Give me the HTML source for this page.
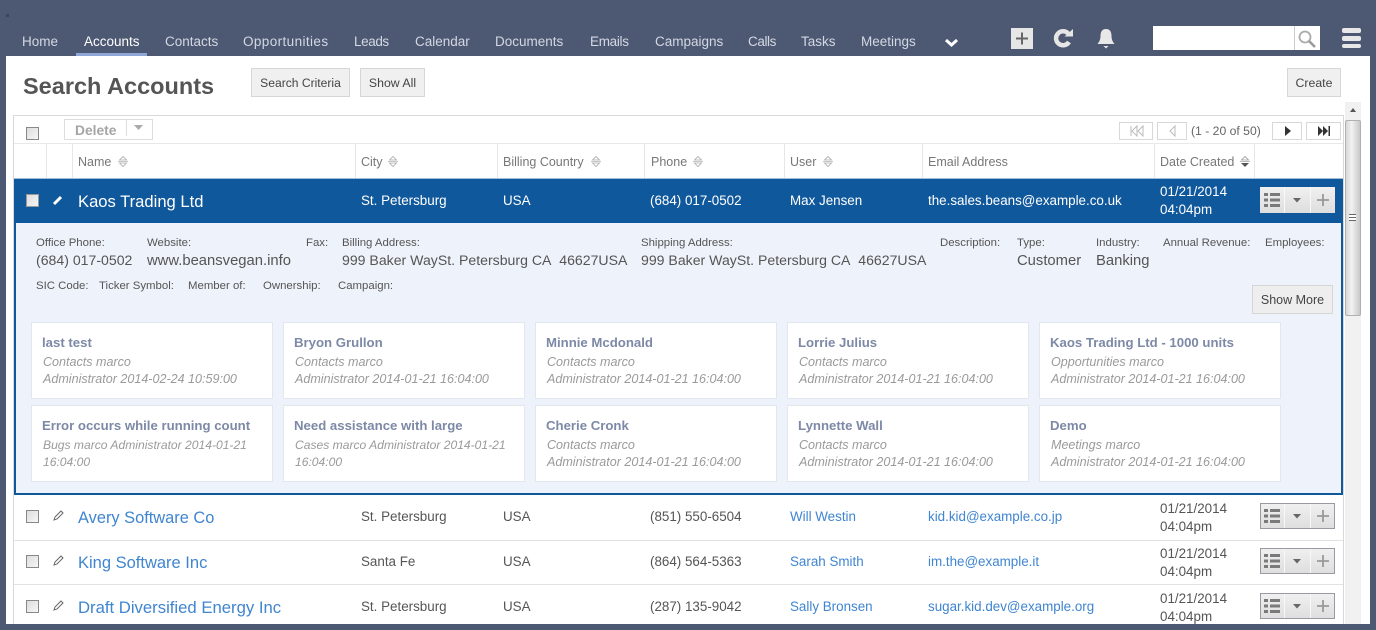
<!DOCTYPE html>
<html><head><meta charset="utf-8"><style>
html,body{margin:0;padding:0}
body{width:1376px;height:630px;overflow:hidden;background:#4d5873;position:relative;font-family:"Liberation Sans",sans-serif;color:#555}
.a{position:absolute;box-sizing:border-box}
.t{position:absolute;white-space:nowrap;line-height:20px}
.n{font-size:13.5px;color:#d3d8e2;top:32px}
.b{position:absolute;box-sizing:border-box;background:#f0f0f0;border:1px solid #d6d6d6;font-size:12.3px;color:#444;text-align:center;line-height:28px;height:29px;top:68px}
.h{font-size:12.5px;color:#777;top:152px}
.c{font-size:13.4px;color:#555}
.w{color:#fff}
.l{color:#3f85d0}
.nm{font-size:16.6px}
.lb{font-size:11.4px;color:#555;top:233px}
.lb2{top:276px}
.v{font-size:14.8px;color:#555;top:251px}
.v.v2{font-size:14.1px;top:250px}
.card{position:absolute;box-sizing:border-box;width:242px;height:77px;background:#fff;border:1px solid #e2e6ee}
.ct{position:absolute;left:10px;top:10px;font-size:13.2px;font-weight:bold;color:#7d89a6;line-height:20px;white-space:nowrap}
.cs{position:absolute;left:11px;top:31px;width:228px;font-size:12.55px;font-style:italic;color:#9a9a9a;line-height:17px;white-space:nowrap}
.cs.w2{font-size:12.1px}
.vl{position:absolute;width:1px;background:#e6e6e6}
.hl{position:absolute;left:14px;width:1329px;height:1px;background:#e2e2e2}
.pg{position:absolute;box-sizing:border-box;top:122px;height:18px;border:1px solid #d8d8d8;background:#fff}
</style></head><body>
<div class="a" style="left:6px;top:14px;width:3px;height:3px;background:#3c4558"></div>

<span class="t n" style="left:22px">Home</span>
<span class="t n" style="left:84px;color:#fff">Accounts</span>
<div class="a" style="left:76px;top:53px;width:71px;height:3px;background:#8ea6d6"></div>
<span class="t n" style="left:165px">Contacts</span>
<span class="t n" style="left:243px;letter-spacing:.4px">Opportunities</span>
<span class="t n" style="left:354px;letter-spacing:-.4px">Leads</span>
<span class="t n" style="left:415px">Calendar</span>
<span class="t n" style="left:495px">Documents</span>
<span class="t n" style="left:590px;letter-spacing:-.3px">Emails</span>
<span class="t n" style="left:655px">Campaigns</span>
<span class="t n" style="left:748px;letter-spacing:-.4px">Calls</span>
<span class="t n" style="left:801px">Tasks</span>
<span class="t n" style="left:861px">Meetings</span>
<svg class="a" style="left:945px;top:38px" width="14" height="10"><path d="M1 2l5.500 5 5.500-5" fill="none" stroke="#fff" stroke-width="3"/></svg>
<div class="a" style="left:1011px;top:28px;width:22px;height:21px;background:#e6e6e6"></div>
<svg class="a" style="left:1011px;top:28px" width="22" height="21"><path d="M5 10.500h12M11 4.500v12" stroke="#666" stroke-width="2"/></svg>
<svg class="a" style="left:1052px;top:27px" width="22" height="22"><path d="M17 15a7 7 0 1 1-.8-8.500" fill="none" stroke="#e6e6e6" stroke-width="4.500"/><path d="M12.500 9.500H21V2z" fill="#e6e6e6"/></svg>
<svg class="a" style="left:1096px;top:27px" width="20" height="23"><path d="M10 2c-4 0-5.500 3-5.500 7 0 4-1.500 6-3 8h17c-1.500-2-3-4-3-8 0-4-1.500-7-5.500-7z" fill="#e8e8e8"/><path d="M7.500 19h5l-2.500 2.500z" fill="#e8e8e8"/></svg>
<div class="a" style="left:1153px;top:26px;width:167px;height:24px;background:#fff"></div>
<div class="a" style="left:1294px;top:26px;width:1px;height:24px;background:#ccc"></div>
<svg class="a" style="left:1295px;top:28px" width="24" height="22"><circle cx="10" cy="9" r="5.500" fill="none" stroke="#aaa" stroke-width="1.800"/><path d="M14 13l6 6" stroke="#999" stroke-width="2.500"/></svg>
<div class="a" style="left:1342px;top:28px;width:19px;height:5px;background:#e8e8e8;border-radius:2px"></div>
<div class="a" style="left:1342px;top:36px;width:19px;height:5px;background:#e8e8e8;border-radius:2px"></div>
<div class="a" style="left:1342px;top:44px;width:19px;height:4px;background:#e8e8e8;border-radius:2px"></div>

<div class="a" style="left:6px;top:56px;width:1364px;height:568px;background:#fff"></div>
<span class="t" style="left:23px;top:72px;font-size:23.5px;line-height:28px;font-weight:bold;color:#555">Search Accounts</span>
<div class="b" style="left:251px;width:99px;font-size:12.1px">Search Criteria</div>
<div class="b" style="left:360px;width:65px">Show All</div>
<div class="b" style="left:1287px;width:54px">Create</div>

<div class="a" style="left:1345px;top:102px;width:16px;height:522px;background:#f1f1f1"></div>
<svg class="a" style="left:1345px;top:106px" width="16" height="8"><path d="M5 6l3-4 3 4z" fill="#555"/></svg>
<div class="a" style="left:1345px;top:120px;width:16px;height:196px;background:linear-gradient(90deg,#d8d8d8,#f2f2f2 40%,#c8c8c8);border:1px solid #b0b0b0;border-radius:2px"></div>
<div class="a" style="left:1349px;top:214px;width:7px;height:7px;border-top:1px solid #666;border-bottom:1px solid #666;background:linear-gradient(#fff 2px,#666 2px,#666 3px,#fff 3px)"></div>

<!-- table frame -->
<div class="a" style="left:13px;top:115px;width:1331px;height:515px;border:1px solid #d8d8d8;border-bottom:0"></div>
<div class="hl" style="top:143px;background:#e8e8e8"></div>
<div class="vl" style="left:46px;top:144px;height:34px"></div>
<div class="vl" style="left:72px;top:144px;height:34px"></div>
<div class="vl" style="left:355px;top:144px;height:34px"></div>
<div class="vl" style="left:497px;top:144px;height:34px"></div>
<div class="vl" style="left:644px;top:144px;height:34px"></div>
<div class="vl" style="left:784px;top:144px;height:34px"></div>
<div class="vl" style="left:922px;top:144px;height:34px"></div>
<div class="vl" style="left:1154px;top:144px;height:34px"></div>
<div class="vl" style="left:1254px;top:144px;height:34px"></div>

<div class="a" style="left:26px;top:127px;width:13px;height:13px;background:linear-gradient(135deg,#ddd,#f6f6f6);border:1px solid #888"></div>
<div class="a" style="left:64px;top:119px;width:89px;height:21px;border:1px solid #ddd;background:#fff"></div>
<span class="t" style="left:75px;top:121px;font-size:13.8px;font-weight:bold;color:#a5a5a5">Delete</span>
<div class="a" style="left:126px;top:120px;width:1px;height:16px;background:#ddd"></div>
<svg class="a" style="left:133px;top:125px" width="12" height="7"><path d="M1 0h9l-4.500 5z" fill="#aaa"/></svg>

<div class="pg" style="left:1119px;width:34px"></div>
<svg class="a" style="left:1130px;top:125px" width="14" height="12"><path d="M1 1v10M7 1l-5 5 5 5zM13 1l-5 5 5 5z" fill="none" stroke="#bbb"/></svg>
<div class="pg" style="left:1157px;width:30px"></div>
<svg class="a" style="left:1168px;top:125px" width="10" height="12"><path d="M7 1l-5 5 5 5z" fill="none" stroke="#bbb"/></svg>
<span class="t" style="left:1191px;top:121px;font-size:12.2px;color:#666">(1 - 20 of 50)</span>
<div class="pg" style="left:1272px;width:30px"></div>
<svg class="a" style="left:1283px;top:125px" width="10" height="12"><path d="M2 1l6 5-6 5z" fill="#333"/></svg>
<div class="pg" style="left:1306px;width:35px"></div>
<svg class="a" style="left:1317px;top:125px" width="14" height="12"><path d="M1 1l5 5-5 5zM6 1l5 5-5 5zM11.500 1h1.500v10h-1.500z" fill="#333"/></svg>

<span class="t h" style="left:78px">Name</span>
<span class="t h" style="left:361px">City</span>
<span class="t h" style="left:503px">Billing Country</span>
<span class="t h" style="left:651px">Phone</span>
<span class="t h" style="left:790px">User</span>
<span class="t h" style="left:928px">Email Address</span>
<span class="t h" style="left:1160px">Date Created</span>
<svg class="a" style="left:118px;top:155px" width="10" height="13"><path d="M1.500 5l3.500-3.500 3.500 3.500zM1.500 8l3.500 3.500 3.500-3.500z" fill="none" stroke="#aaa" stroke-width=".8"/><path d="M0 6.500h10" stroke="#bbb" stroke-width=".8"/></svg>
<svg class="a" style="left:388px;top:155px" width="10" height="13"><path d="M1.500 5l3.500-3.500 3.500 3.500zM1.500 8l3.500 3.500 3.500-3.500z" fill="none" stroke="#aaa" stroke-width=".8"/><path d="M0 6.500h10" stroke="#bbb" stroke-width=".8"/></svg>
<svg class="a" style="left:591px;top:155px" width="10" height="13"><path d="M1.500 5l3.500-3.500 3.500 3.500zM1.500 8l3.500 3.500 3.500-3.500z" fill="none" stroke="#aaa" stroke-width=".8"/><path d="M0 6.500h10" stroke="#bbb" stroke-width=".8"/></svg>
<svg class="a" style="left:693px;top:155px" width="10" height="13"><path d="M1.500 5l3.500-3.500 3.500 3.500zM1.500 8l3.500 3.500 3.500-3.500z" fill="none" stroke="#aaa" stroke-width=".8"/><path d="M0 6.500h10" stroke="#bbb" stroke-width=".8"/></svg>
<svg class="a" style="left:823px;top:155px" width="10" height="13"><path d="M1.500 5l3.500-3.500 3.500 3.500zM1.500 8l3.500 3.500 3.500-3.500z" fill="none" stroke="#aaa" stroke-width=".8"/><path d="M0 6.500h10" stroke="#bbb" stroke-width=".8"/></svg>
<svg class="a" style="left:1240px;top:155px" width="10" height="13"><path d="M1.500 5l3.500-3.500 3.500 3.500z" fill="none" stroke="#999" stroke-width=".8"/><path d="M0 6.500h10" stroke="#aaa" stroke-width=".8"/><path d="M1 8l4 4 4-4z" fill="#555"/></svg>

<!-- selected row -->
<div class="a" style="left:14px;top:178px;width:1329px;height:45px;background:#10589c;border-top:1px solid #9fc0dd"></div>
<div class="a" style="left:26px;top:194px;width:13px;height:13px;background:linear-gradient(135deg,#ddd,#f6f6f6);border:1px solid #999"></div>
<svg class="a" style="left:52px;top:194px" width="12" height="12"><path d="M2 10l7-7" stroke="#fff" stroke-width="3"/></svg>
<span class="t w nm" style="left:78px;top:192px">Kaos Trading Ltd</span>
<span class="t c w" style="left:361px;top:191px">St. Petersburg</span>
<span class="t c w" style="left:503px;top:191px">USA</span>
<span class="t c w" style="left:650px;top:191px">(684) 017-0502</span>
<span class="t c w" style="left:790px;top:191px">Max Jensen</span>
<span class="t c w" style="left:928px;top:191px">the.sales.beans@example.co.uk</span>
<span class="t c w" style="left:1160px;top:182px">01/21/2014</span>
<span class="t c w" style="left:1160px;top:200px">04:04pm</span>

<!-- details -->
<div class="a" style="left:14px;top:223px;width:1329px;height:272px;background:#eef2fa;border:2px solid #10589c;border-top:0"></div>
<span class="t lb" style="left:36px">Office Phone:</span>
<span class="t lb" style="left:147px">Website:</span>
<span class="t lb" style="left:306px">Fax:</span>
<span class="t lb" style="left:342px">Billing Address:</span>
<span class="t lb" style="left:641px">Shipping Address:</span>
<span class="t lb" style="left:940px">Description:</span>
<span class="t lb" style="left:1017px">Type:</span>
<span class="t lb" style="left:1096px">Industry:</span>
<span class="t lb" style="left:1163px">Annual Revenue:</span>
<span class="t lb" style="left:1265px">Employees:</span>
<span class="t v v2" style="left:36px">(684) 017-0502</span>
<span class="t v" style="left:147px">www.beansvegan.info</span>
<span class="t v v2" style="left:342px">999 Baker WaySt. Petersburg CA&nbsp; 46627USA</span>
<span class="t v v2" style="left:641px">999 Baker WaySt. Petersburg CA&nbsp; 46627USA</span>
<span class="t v" style="left:1017px">Customer</span>
<span class="t v" style="left:1096px">Banking</span>
<span class="t lb lb2" style="left:36px">SIC Code:</span>
<span class="t lb lb2" style="left:99px">Ticker Symbol:</span>
<span class="t lb lb2" style="left:188px">Member of:</span>
<span class="t lb lb2" style="left:263px">Ownership:</span>
<span class="t lb lb2" style="left:338px">Campaign:</span>
<div class="b" style="left:1252px;top:285px;width:81px;background:#eee;font-size:12.5px">Show More</div>

<div class="card" style="left:31px;top:322px"><div class="ct">last test</div><div class="cs">Contacts marco<br>Administrator 2014-02-24 10:59:00</div></div>
<div class="card" style="left:283px;top:322px"><div class="ct">Bryon Grullon</div><div class="cs">Contacts marco<br>Administrator 2014-01-21 16:04:00</div></div>
<div class="card" style="left:535px;top:322px"><div class="ct">Minnie Mcdonald</div><div class="cs">Contacts marco<br>Administrator 2014-01-21 16:04:00</div></div>
<div class="card" style="left:787px;top:322px"><div class="ct">Lorrie Julius</div><div class="cs">Contacts marco<br>Administrator 2014-01-21 16:04:00</div></div>
<div class="card" style="left:1039px;top:322px"><div class="ct">Kaos Trading Ltd - 1000 units</div><div class="cs">Opportunities marco<br>Administrator 2014-01-21 16:04:00</div></div>
<div class="card" style="left:31px;top:405px"><div class="ct">Error occurs while running count</div><div class="cs w2">Bugs marco Administrator 2014-01-21<br>16:04:00</div></div>
<div class="card" style="left:283px;top:405px"><div class="ct">Need assistance with large</div><div class="cs w2">Cases marco Administrator 2014-01-21<br>16:04:00</div></div>
<div class="card" style="left:535px;top:405px"><div class="ct">Cherie Cronk</div><div class="cs">Contacts marco<br>Administrator 2014-01-21 16:04:00</div></div>
<div class="card" style="left:787px;top:405px"><div class="ct">Lynnette Wall</div><div class="cs">Contacts marco<br>Administrator 2014-01-21 16:04:00</div></div>
<div class="card" style="left:1039px;top:405px"><div class="ct">Demo</div><div class="cs">Meetings marco<br>Administrator 2014-01-21 16:04:00</div></div>

<!-- rows -->
<div class="hl" style="top:540px"></div>
<div class="hl" style="top:584px"></div>

<div class="a" style="left:26px;top:510px;width:13px;height:13px;background:linear-gradient(135deg,#ddd,#f6f6f6);border:1px solid #888"></div>
<svg class="a" style="left:52px;top:510px" width="12" height="12"><path d="M2 10l1-3 6-6 2 2-6 6z" fill="none" stroke="#666"/></svg>
<span class="t l nm" style="left:78px;top:508px;font-size:16.4px">Avery Software Co</span>
<span class="t c" style="left:361px;top:507px">St. Petersburg</span>
<span class="t c" style="left:503px;top:507px">USA</span>
<span class="t c" style="left:650px;top:507px">(851) 550-6504</span>
<span class="t c l" style="left:790px;top:507px">Will Westin</span>
<span class="t c l" style="left:928px;top:507px">kid.kid@example.co.jp</span>
<span class="t c" style="left:1160px;top:499px">01/21/2014</span>
<span class="t c" style="left:1160px;top:517px">04:04pm</span>

<div class="a" style="left:26px;top:555px;width:13px;height:13px;background:linear-gradient(135deg,#ddd,#f6f6f6);border:1px solid #888"></div>
<svg class="a" style="left:52px;top:555px" width="12" height="12"><path d="M2 10l1-3 6-6 2 2-6 6z" fill="none" stroke="#666"/></svg>
<span class="t l nm" style="left:78px;top:553px;font-size:16.5px">King Software Inc</span>
<span class="t c" style="left:361px;top:552px">Santa Fe</span>
<span class="t c" style="left:503px;top:552px">USA</span>
<span class="t c" style="left:650px;top:552px">(864) 564-5363</span>
<span class="t c l" style="left:790px;top:552px">Sarah Smith</span>
<span class="t c l" style="left:928px;top:552px">im.the@example.it</span>
<span class="t c" style="left:1160px;top:544px">01/21/2014</span>
<span class="t c" style="left:1160px;top:562px">04:04pm</span>

<div class="a" style="left:26px;top:600px;width:13px;height:13px;background:linear-gradient(135deg,#ddd,#f6f6f6);border:1px solid #888"></div>
<svg class="a" style="left:52px;top:600px" width="12" height="12"><path d="M2 10l1-3 6-6 2 2-6 6z" fill="none" stroke="#666"/></svg>
<span class="t l nm" style="left:78px;top:598px;font-size:16.7px">Draft Diversified Energy Inc</span>
<span class="t c" style="left:361px;top:597px">St. Petersburg</span>
<span class="t c" style="left:503px;top:597px">USA</span>
<span class="t c" style="left:650px;top:597px">(287) 135-9042</span>
<span class="t c l" style="left:790px;top:597px">Sally Bronsen</span>
<span class="t c l" style="left:928px;top:597px">sugar.kid.dev@example.org</span>
<span class="t c" style="left:1160px;top:589px">01/21/2014</span>
<span class="t c" style="left:1160px;top:607px">04:04pm</span>

<!-- action groups -->
<svg class="a" style="left:1260px;top:187px" width="75" height="26"><defs><linearGradient id="g" x1="0" y1="0" x2="0" y2="1"><stop offset="0" stop-color="#f0f0f0"/><stop offset="1" stop-color="#dedede"/></linearGradient></defs><rect width="75" height="26" fill="url(#g)"/><path d="M24.500 0v26M50.500 0v26" stroke="#f8f8f8"/><path d="M4 6h4v3H4zM4 11.500h4v3H4zM4 17h4v3H4zM10 6h10v3H10zM10 11.500h10v3H10zM10 17h10v3H10z" fill="#7a7a7a"/><path d="M33 11h8l-4 4.500z" fill="#666"/><path d="M57 13h12M63 7v12" stroke="#999" stroke-width="1.800"/></svg>
<svg class="a" style="left:1260px;top:503px" width="75" height="26"><rect x=".5" y=".5" width="74" height="25" fill="url(#g)" stroke="#999aa4"/><path d="M24.500 1v24M50.500 1v24" stroke="#f8f8f8"/><path d="M4 6h4v3H4zM4 11.500h4v3H4zM4 17h4v3H4zM10 6h10v3H10zM10 11.500h10v3H10zM10 17h10v3H10z" fill="#7a7a7a"/><path d="M33 11h8l-4 4.500z" fill="#666"/><path d="M57 13h12M63 7v12" stroke="#999" stroke-width="1.800"/></svg>
<svg class="a" style="left:1260px;top:548px" width="75" height="26"><rect x=".5" y=".5" width="74" height="25" fill="url(#g)" stroke="#999aa4"/><path d="M24.500 1v24M50.500 1v24" stroke="#f8f8f8"/><path d="M4 6h4v3H4zM4 11.500h4v3H4zM4 17h4v3H4zM10 6h10v3H10zM10 11.500h10v3H10zM10 17h10v3H10z" fill="#7a7a7a"/><path d="M33 11h8l-4 4.500z" fill="#666"/><path d="M57 13h12M63 7v12" stroke="#999" stroke-width="1.800"/></svg>
<svg class="a" style="left:1260px;top:593px" width="75" height="26"><rect x=".5" y=".5" width="74" height="25" fill="url(#g)" stroke="#999aa4"/><path d="M24.500 1v24M50.500 1v24" stroke="#f8f8f8"/><path d="M4 6h4v3H4zM4 11.500h4v3H4zM4 17h4v3H4zM10 6h10v3H10zM10 11.500h10v3H10zM10 17h10v3H10z" fill="#7a7a7a"/><path d="M33 11h8l-4 4.500z" fill="#666"/><path d="M57 13h12M63 7v12" stroke="#999" stroke-width="1.800"/></svg>

<div class="a" style="left:0;top:624px;width:1376px;height:6px;background:#4d5873"></div>
</body></html>
